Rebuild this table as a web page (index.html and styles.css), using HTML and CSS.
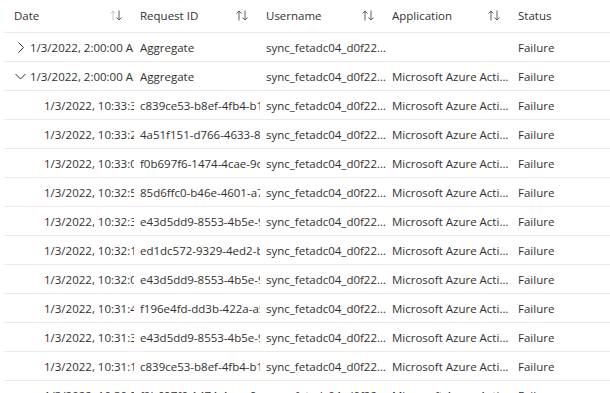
FILE: index.html
```html
<!DOCTYPE html>
<html lang="en">
<head>
<meta charset="utf-8">
<title>Sign-in logs</title>
<link rel="stylesheet" href="styles.css">
</head>
<body>
<div class="table">
  <div class="row head">
    <div class="hcell"><span>Date</span><svg class="sort" width="12" height="11" viewBox="0 0 12 11"><path class="up light" d="M3 10.5V1M0.5 3.5L3 1l2.5 2.5"/><path class="dn" d="M9 0.5V10M6.5 7.5L9 10l2.5-2.5"/></svg></div>
    <div class="hcell"><span>Request ID</span><svg class="sort" width="12" height="11" viewBox="0 0 12 11"><path class="up" d="M3 10.5V1M0.5 3.5L3 1l2.5 2.5"/><path class="dn" d="M9 0.5V10M6.5 7.5L9 10l2.5-2.5"/></svg></div>
    <div class="hcell"><span>Username</span><svg class="sort" width="12" height="11" viewBox="0 0 12 11"><path class="up" d="M3 10.5V1M0.5 3.5L3 1l2.5 2.5"/><path class="dn" d="M9 0.5V10M6.5 7.5L9 10l2.5-2.5"/></svg></div>
    <div class="hcell"><span>Application</span><svg class="sort" width="12" height="11" viewBox="0 0 12 11"><path class="up" d="M3 10.5V1M0.5 3.5L3 1l2.5 2.5"/><path class="dn" d="M9 0.5V10M6.5 7.5L9 10l2.5-2.5"/></svg></div>
    <div class="hcell"><span>Status</span></div>
  </div>

  <div class="row">
    <div class="cell clip group"><svg class="chev" width="11" height="11" viewBox="0 0 11 11"><path d="M3.5 0.5l5 5-5 5"/></svg>1/3/2022, 2:00:00 AM</div>
    <div class="cell clip">Aggregate</div>
    <div class="cell ell">sync_fetadc04_d0f22b8a91c4@contoso.onmicrosoft.com</div>
    <div class="cell ell"></div>
    <div class="cell ell">Failure</div>
  </div>
  <div class="row">
    <div class="cell clip group"><svg class="chev" width="11" height="11" viewBox="0 0 11 11"><path d="M0.5 3l5 5 5-5"/></svg>1/3/2022, 2:00:00 AM</div>
    <div class="cell clip">Aggregate</div>
    <div class="cell ell">sync_fetadc04_d0f22b8a91c4@contoso.onmicrosoft.com</div>
    <div class="cell ell">Microsoft Azure Active Directory Connect</div>
    <div class="cell ell">Failure</div>
  </div>
  <div class="row">
    <div class="cell clip child">1/3/2022, 10:33:37 AM</div>
    <div class="cell clip">c839ce53-b8ef-4fb4-b1d2-7a0e5c3f9b21</div>
    <div class="cell ell">sync_fetadc04_d0f22b8a91c4@contoso.onmicrosoft.com</div>
    <div class="cell ell">Microsoft Azure Active Directory Connect</div>
    <div class="cell ell">Failure</div>
  </div>
  <div class="row">
    <div class="cell clip child">1/3/2022, 10:33:21 AM</div>
    <div class="cell clip">4a51f151-d766-4633-8e0b-2c6f4d91a7e3</div>
    <div class="cell ell">sync_fetadc04_d0f22b8a91c4@contoso.onmicrosoft.com</div>
    <div class="cell ell">Microsoft Azure Active Directory Connect</div>
    <div class="cell ell">Failure</div>
  </div>
  <div class="row">
    <div class="cell clip child">1/3/2022, 10:33:05 AM</div>
    <div class="cell clip">f0b697f6-1474-4cae-9d3a-51e2b7c08f64</div>
    <div class="cell ell">sync_fetadc04_d0f22b8a91c4@contoso.onmicrosoft.com</div>
    <div class="cell ell">Microsoft Azure Active Directory Connect</div>
    <div class="cell ell">Failure</div>
  </div>
  <div class="row">
    <div class="cell clip child">1/3/2022, 10:32:52 AM</div>
    <div class="cell clip">85d6ffc0-b46e-4601-a7c5-0e93d2b4f618</div>
    <div class="cell ell">sync_fetadc04_d0f22b8a91c4@contoso.onmicrosoft.com</div>
    <div class="cell ell">Microsoft Azure Active Directory Connect</div>
    <div class="cell ell">Failure</div>
  </div>
  <div class="row">
    <div class="cell clip child">1/3/2022, 10:32:36 AM</div>
    <div class="cell clip">e43d5dd9-8553-4b5e-9f21-c7a84e06d3b5</div>
    <div class="cell ell">sync_fetadc04_d0f22b8a91c4@contoso.onmicrosoft.com</div>
    <div class="cell ell">Microsoft Azure Active Directory Connect</div>
    <div class="cell ell">Failure</div>
  </div>
  <div class="row">
    <div class="cell clip child">1/3/2022, 10:32:19 AM</div>
    <div class="cell clip">ed1dc572-9329-4ed2-b6a0-3f85e1c7d942</div>
    <div class="cell ell">sync_fetadc04_d0f22b8a91c4@contoso.onmicrosoft.com</div>
    <div class="cell ell">Microsoft Azure Active Directory Connect</div>
    <div class="cell ell">Failure</div>
  </div>
  <div class="row">
    <div class="cell clip child">1/3/2022, 10:32:03 AM</div>
    <div class="cell clip">e43d5dd9-8553-4b5e-9f21-c7a84e06d3b5</div>
    <div class="cell ell">sync_fetadc04_d0f22b8a91c4@contoso.onmicrosoft.com</div>
    <div class="cell ell">Microsoft Azure Active Directory Connect</div>
    <div class="cell ell">Failure</div>
  </div>
  <div class="row">
    <div class="cell clip child">1/3/2022, 10:31:48 AM</div>
    <div class="cell clip">f196e4fd-dd3b-422a-a5e8-6b0c2f71d39a</div>
    <div class="cell ell">sync_fetadc04_d0f22b8a91c4@contoso.onmicrosoft.com</div>
    <div class="cell ell">Microsoft Azure Active Directory Connect</div>
    <div class="cell ell">Failure</div>
  </div>
  <div class="row">
    <div class="cell clip child">1/3/2022, 10:31:32 AM</div>
    <div class="cell clip">e43d5dd9-8553-4b5e-9f21-c7a84e06d3b5</div>
    <div class="cell ell">sync_fetadc04_d0f22b8a91c4@contoso.onmicrosoft.com</div>
    <div class="cell ell">Microsoft Azure Active Directory Connect</div>
    <div class="cell ell">Failure</div>
  </div>
  <div class="row">
    <div class="cell clip child">1/3/2022, 10:31:16 AM</div>
    <div class="cell clip">c839ce53-b8ef-4fb4-b1d2-7a0e5c3f9b21</div>
    <div class="cell ell">sync_fetadc04_d0f22b8a91c4@contoso.onmicrosoft.com</div>
    <div class="cell ell">Microsoft Azure Active Directory Connect</div>
    <div class="cell ell">Failure</div>
  </div>
  <div class="row">
    <div class="cell clip child">1/3/2022, 10:30:59 AM</div>
    <div class="cell clip">f0b697f6-1474-4cae-9d3a-51e2b7c08f64</div>
    <div class="cell ell">sync_fetadc04_d0f22b8a91c4@contoso.onmicrosoft.com</div>
    <div class="cell ell">Microsoft Azure Active Directory Connect</div>
    <div class="cell ell">Failure</div>
  </div>
</div>
</body>
</html>
```
FILE: styles.css
```css
html, body {
  margin: 0;
  padding: 0;
  background: #ffffff;
  overflow: hidden;
}
body {
  font-family: "Segoe UI", "Open Sans", "Noto Sans", sans-serif;
  font-size: 11.5px;
  color: #323130;
  -webkit-font-smoothing: antialiased;
}
.table {
  margin-left: 4px;
  width: 606px;
}
.row {
  display: grid;
  grid-template-columns: 120px 120px 120px 120px 1fr;
  column-gap: 6px;
  padding-left: 10px;
  padding-top: 1px;
  height: 27px;
  border-bottom: 1px solid #edebe9;
  align-items: center;
}
.row.head {
  padding-top: 0;
  height: 31px;
  padding-bottom: 1px;
}
.hcell {
  display: flex;
  align-items: center;
  white-space: nowrap;
  color: #323130;
}
.hcell .sort {
  margin-left: auto;
  margin-right: 12px;
  fill: none;
  stroke: #605e5c;
  stroke-width: 1;
}
.hcell .sort .light {
  stroke: #c8c6c4;
}
.cell {
  white-space: nowrap;
  overflow: hidden;
  line-height: 16px;
}
.clip {
  text-overflow: clip;
}
.ell {
  text-overflow: ellipsis;
}
.group {
  display: flex;
  align-items: center;
}
.chev {
  flex: none;
  width: 11px;
  height: 11px;
  margin: 0 4px 0 1px;
  fill: none;
  stroke: #323130;
  stroke-width: 1;
}
.child {
  padding-left: 30px;
}
```
